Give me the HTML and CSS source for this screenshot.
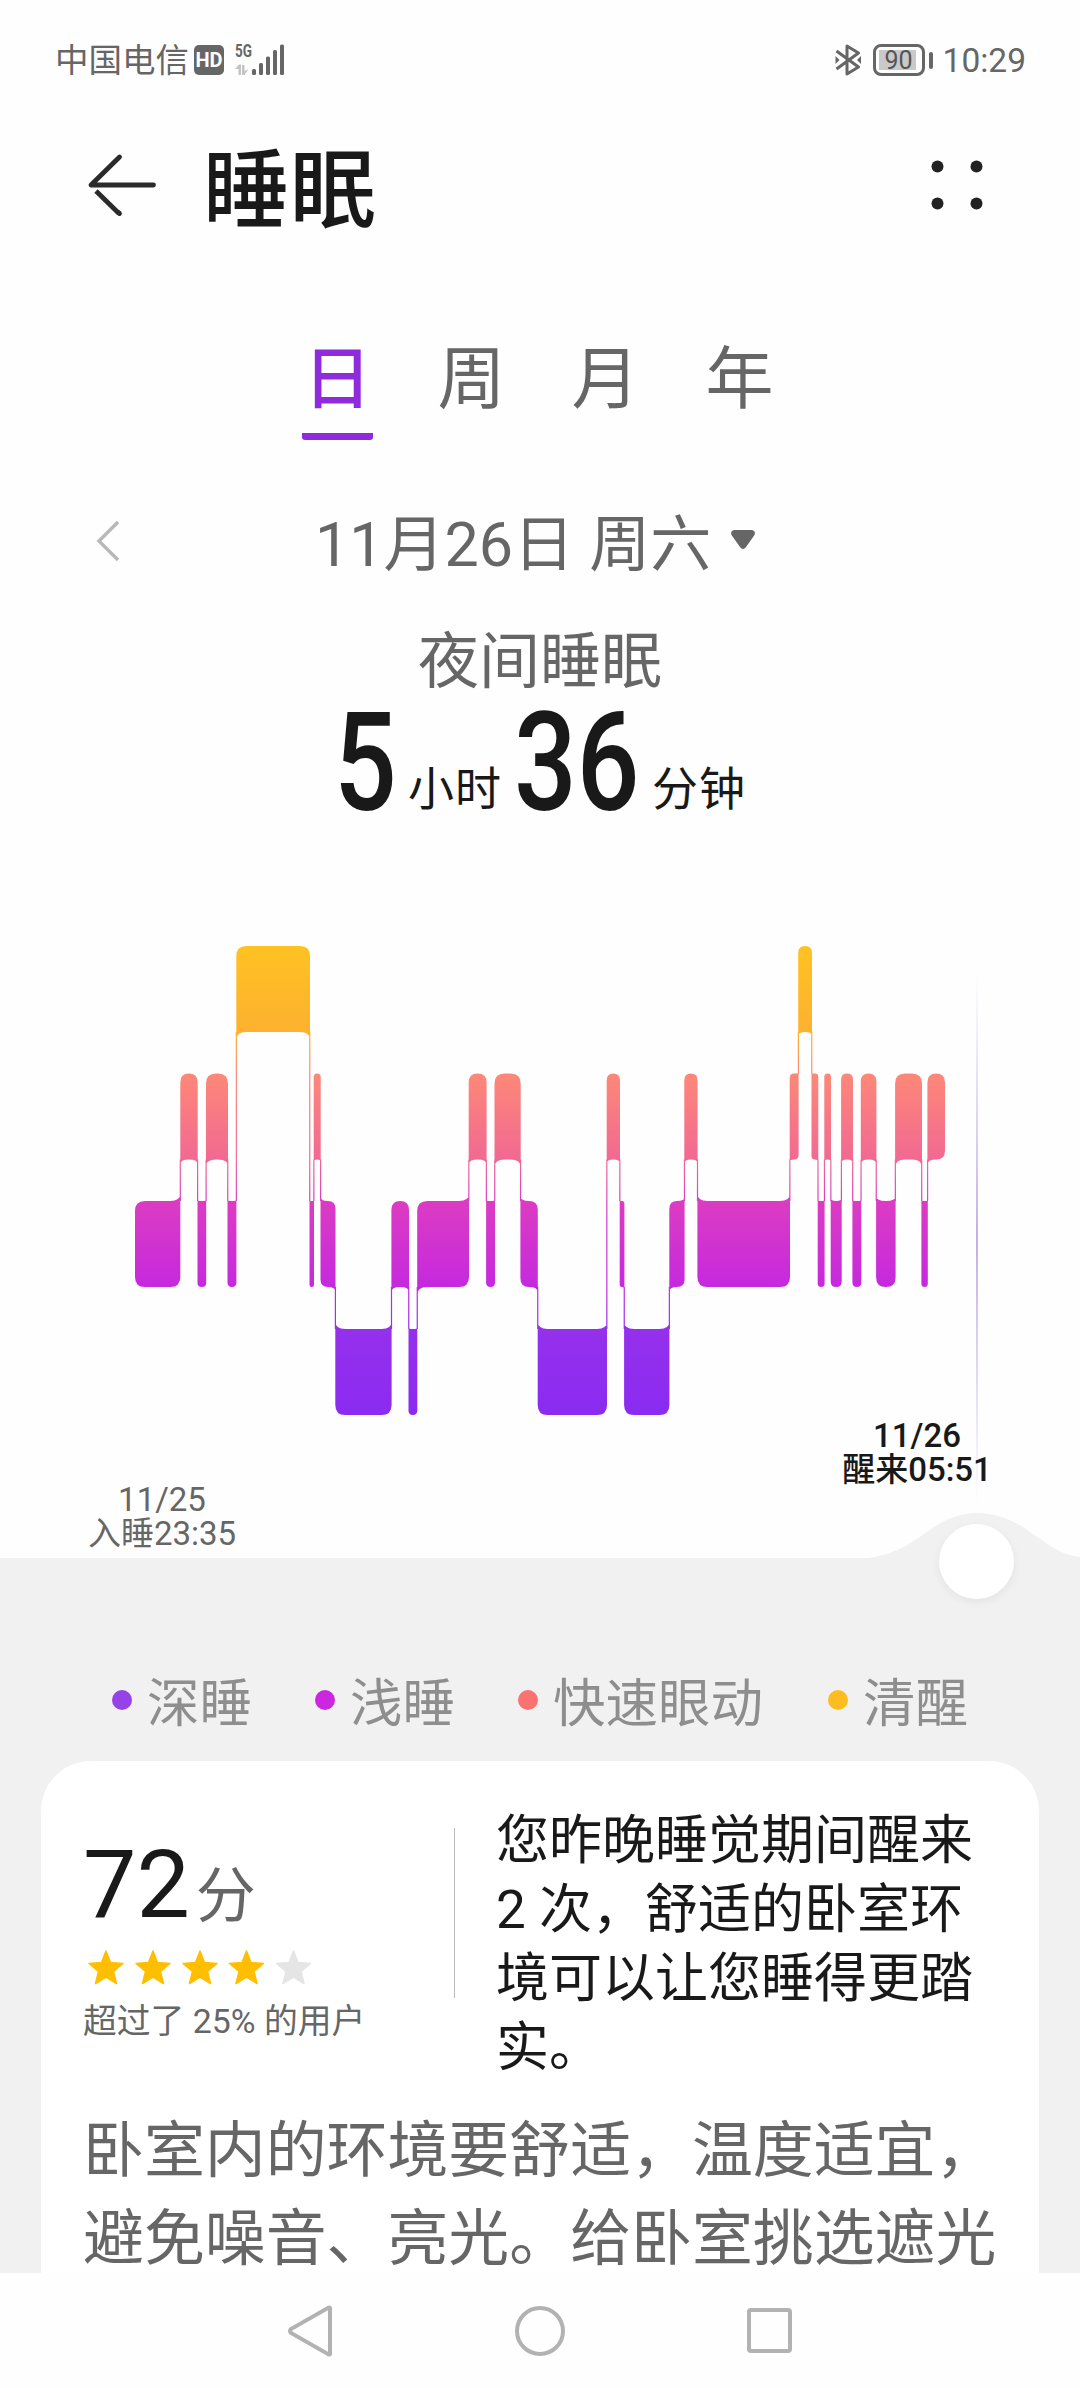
FILE: index.html
```html
<!DOCTYPE html>
<html lang="zh-CN">
<head>
<meta charset="utf-8">
<title>睡眠</title>
<link rel="stylesheet" href="styles.css">
</head>
<body>
<div class="screen">
  <header class="status">
    <span class="carrier">中国电信</span>
    <span class="hd">HD</span>
    <span class="network">
      <span class="gen">5G</span>
      <svg class="signal" width="50" height="32" viewBox="0 0 50 32">
        <g fill="#c4c4c4"><path d="M0 25l4-4.500h2V31H3.500v-6zM7 21h2.500v6l4-2-4 6H7z"/></g>
        <g fill="#666"><rect x="17" y="25" width="4" height="6" rx="1.500"/><rect x="24" y="19" width="4" height="12" rx="1.500"/><rect x="31" y="12.500" width="4" height="18.500" rx="1.500"/><rect x="38" y="6" width="4" height="25" rx="1.500"/><rect x="45" y="0.500" width="4" height="30.500" rx="1.500"/></g>
      </svg>
    </span>
    <svg class="bluetooth" width="27" height="34" viewBox="0 0 27 34" fill="none" stroke="#666" stroke-width="3" stroke-linejoin="round">
      <path d="M1.500 8L23.500 24 12 31V3l11.500 7L1.500 26"/><path d="M.5 13v8l4-4zM26 13v8l-4-4z" fill="#666" stroke="none"/>
    </svg>
    <span class="battery"><span class="level">90</span></span>
    <span class="battery-cap"></span>
    <span class="clock">10:29</span>
  </header>

  <div class="titlebar">
    <svg class="back" width="70" height="62" viewBox="0 0 70 62" fill="none" stroke="#2b2b2b" stroke-width="4.800" stroke-linecap="round" stroke-linejoin="round">
      <path d="M32.500 3L4 31h62.500"/><path d="M9 37L32 59.500" stroke-linecap="butt"/><path d="M31.500 58.500l1 1"/>
    </svg>
    <h1 class="title">睡眠</h1>
    <svg class="more" width="52" height="50" viewBox="0 0 52 50" fill="#222"><circle cx="6.500" cy="6.500" r="6"/><circle cx="45.500" cy="6.500" r="6"/><circle cx="6.500" cy="43.500" r="6"/><circle cx="45.500" cy="43.500" r="6"/></svg>
  </div>

  <nav class="tabs">
    <span class="tab active">日</span><span class="tab">周</span><span class="tab">月</span><span class="tab">年</span>
  </nav>

  <div class="date-row">
    <svg class="prev" width="24" height="42" viewBox="0 0 24 42" fill="none" stroke="#b8b8b8" stroke-width="3.400"><path d="M22 2L3 21l19 19"/></svg>
    <span class="date">11月26日 周六</span>
    <svg class="caret" width="26" height="22" viewBox="0 0 26 22" fill="#666"><path d="M4 1h18q4 1 2.500 5L16 18q-3 4-6 0L1.500 6Q0 2 4 1z"/></svg>
  </div>

  <div class="subtitle">夜间睡眠</div>
  <div class="duration">
    <span class="num one"><span class="digits">5</span></span><span class="unit">小时</span>
    <span class="num two"><span class="digits">36</span></span><span class="unit">分钟</span>
  </div>

  <section class="chart">
    <svg class="plot" width="1080" height="658" viewBox="0 900 1080 658">
      <defs>
        <linearGradient id="stages" gradientUnits="userSpaceOnUse" x1="0" y1="946" x2="0" y2="1415">
          <stop offset="0" stop-color="#ffc222"/><stop offset=".185" stop-color="#fdb12f"/>
          <stop offset=".272" stop-color="#fd8878"/><stop offset=".456" stop-color="#f16992"/>
          <stop offset=".544" stop-color="#dc3cc2"/><stop offset=".727" stop-color="#c529de"/>
          <stop offset=".817" stop-color="#9530ec"/><stop offset="1" stop-color="#8b2bf1"/>
        </linearGradient>
        <linearGradient id="cursor" x1="0" y1="0" x2="0" y2="1">
          <stop offset="0" stop-color="#c4b4f0" stop-opacity="0"/><stop offset=".5" stop-color="#c0b0e6"/><stop offset="1" stop-color="#c4b4f0" stop-opacity="0"/>
        </linearGradient>
      </defs>
      <rect x="976" y="972" width="2" height="535" fill="url(#cursor)"/>
      <g id="bars" fill="url(#stages)"></g>
    </svg>
    <div class="mark start">11/25<br>入睡23:35</div>
    <div class="mark end">11/26<br>醒来05:51</div>
    <svg class="bump" width="226" height="46" viewBox="0 0 226 46" fill="#f1f1f1"><path d="M0 46C68 44 72 1 123 0c50 1 65 40 103 44v2z"/></svg>
    <span class="handle"></span>
  </section>

  <section class="details">
    <ul class="legend">
      <li class="deep">深睡</li><li class="light">浅睡</li><li class="rem">快速眼动</li><li class="awake">清醒</li>
    </ul>
    <article class="card">
      <div class="summary">
        <div class="score">
          <div class="points"><b>72</b><span>分</span></div>
          <svg class="stars" width="210" height="38" viewBox="0 0 210 38">
            <defs><path id="star" d="M0-17L4.500-5.500 17-4.500 7.500 3.500 10.500 15.500 0 9-10.500 15.500-7.500 3.500-17-4.500-4.500-5.500z" stroke-width="1.500" stroke-linejoin="round"/></defs>
            <g fill="#ffbf00" stroke="#ffbf00"><use href="#star" x="19" y="19"/><use href="#star" x="66" y="19"/><use href="#star" x="113" y="19"/><use href="#star" x="159.500" y="19"/></g>
            <use href="#star" x="206.500" y="19" fill="#e5e5e5" stroke="#e5e5e5"/>
          </svg>
          <div class="rank">超过了 25% 的用户</div>
        </div>
        <p class="comment">您昨晚睡觉期间醒来<br>2 次，舒适的卧室环<br>境可以让您睡得更踏<br>实。</p>
      </div>
      <p class="advice">卧室内的环境要舒适，温度适宜，<br>避免噪音、亮光。给卧室挑选遮光</p>
    </article>
  </section>

  <footer class="navbar">
    <svg width="48" height="54" viewBox="0 0 48 54"><path d="M43 4v46q-1 1-2 0L4 29q-2-2 0-4L41 4q1-1 2 0z"/></svg>
    <svg width="54" height="54" viewBox="0 0 54 54"><circle cx="27" cy="27" r="23"/></svg>
    <svg width="48" height="54" viewBox="0 0 48 54"><rect x="4" y="6" width="41" height="41" rx="2"/></svg>
  </footer>
</div>
<script src="chart.js"></script>
</body>
</html>
```
FILE: styles.css
```css
* { box-sizing: border-box; }
body {
  margin: 0;
  background: #fefefe;
  font-family: Roboto, "Noto Sans CJK SC", sans-serif;
  color: #666;
}
.screen {
  width: 1080px;
  height: 2388px;
  display: flex;
  flex-direction: column;
  overflow: hidden;
}
h1, p, ul { margin: 0; padding: 0; }
svg { display: block; flex: none; overflow: visible; }

.status {
  height: 120px;
  padding: 0 54px 0 55px;
  display: flex;
  align-items: center;
  font-size: 33.500px;
  line-height: 40px;
}
.carrier { height: 38px; width: 139px; white-space: nowrap; }
.hd {
  width: 30px;
  height: 30px;
  border-radius: 5px;
  background: #666;
  color: #fff;
  font-size: 20px;
  font-weight: 700;
  line-height: 31px;
  text-align: center;
}
.network { width: 52px; height: 32px; margin-left: 11px; position: relative; }
.gen {
  position: absolute;
  left: 0;
  top: -1px;
  font-size: 18px;
  font-weight: 700;
  line-height: 16px;
  transform: scaleX(.75);
  transform-origin: 0 0;
}
.bluetooth { margin-left: auto; }
.battery {
  width: 52px;
  height: 32px;
  margin-left: 11px;
  border: 3px solid #666;
  border-radius: 8px;
  padding: 3px;
}
.level {
  display: block;
  width: 37px;
  height: 20px;
  background: #c9c9c9;
  color: #555;
  font-size: 25px;
  line-height: 21px;
  text-align: center;
  padding-left: 3px;
}
.battery-cap { width: 4px; height: 17px; border-radius: 2px; background: #666; margin: 0 10px 0 4px; }
.clock { height: 38px; }

.titlebar {
  height: 130px;
  padding: 0 97px 0 87px;
  display: flex;
  align-items: center;
}
.title {
  margin-left: 46px;
  padding-top: 7px;
  font-size: 86px;
  line-height: 124px;
  height: 124px;
  font-weight: 500;
  letter-spacing: 1px;
  color: #191919;
}
.more { margin-left: auto; }

.tabs {
  height: 190px;
  padding: 72px 3px 0 0;
  display: flex;
  justify-content: center;
  gap: 63px;
}
.tab {
  width: 71px;
  height: 118px;
  text-align: center;
  font-size: 68px;
  line-height: 116px;
}
.active { color: #8f2bdc; font-weight: 500; border-bottom: 7px solid #8f2bdc; border-radius: 3px; }

.date-row {
  height: 192px;
  padding: 0 96px;
  display: flex;
  align-items: flex-start;
}
.prev { margin-top: 80px; }
.date { margin: 65px 0 0 195px; font-size: 61px; line-height: 80px; height: 80px; white-space: pre; }
.caret { margin: 89px 0 0 19px; }

.subtitle { text-align: center; font-size: 61px; line-height: 60px; height: 60px; }
.duration {
  height: 208px;
  padding-left: 334px;
  display: flex;
  align-items: baseline;
  color: #191919;
  white-space: nowrap;
}
.num { font-size: 138px; font-weight: 500; line-height: 142px; }
.one { width: 74px; }
.two { width: 138px; margin-left: 12px; }
.digits { display: inline-block; transform: scaleX(.8); transform-origin: 0 0; }
.unit { font-size: 46px; line-height: 60px; letter-spacing: 1px; transform: translateY(-5px); }

.chart { position: relative; height: 658px; flex: none; }
.mark {
  position: absolute;
  width: 150px;
  text-align: center;
  font-size: 33px;
  line-height: 34px;
  white-space: nowrap;
}
.start { left: 87px; top: 583px; }
.end { left: 842px; top: 519px; font-weight: 500; color: #191919; }
.bump { position: absolute; left: 854px; top: 613px; }
.handle {
  position: absolute;
  left: 939px;
  top: 624px;
  width: 75px;
  height: 75px;
  border-radius: 50%;
  background: #fff;
  box-shadow: 0 3px 10px rgba(0, 0, 0, .06);
}

.details {
  height: 715px;
  flex: none;
  padding: 107px 41px 0;
  background: #f1f1f1;
}
.legend { height: 96px; display: flex; padding-left: 71px; list-style: none; }
.legend li {
  display: flex;
  align-items: center;
  height: 70px;
  padding-top: 8px;
  font-size: 52.500px;
  line-height: 62px;
  color: #8e8e8e;
}
.legend .deep, .legend .light { margin-right: 63px; }
.legend .rem { margin-right: 65px; }
.legend li::before { content: ""; width: 20px; height: 20px; border-radius: 50%; margin: 0 15px 8px 0; }
.legend .deep::before { background: #9543e6; }
.legend .light::before { background: #cb27df; }
.legend .rem::before { background: #fb7370; }
.legend .awake::before { background: #fdbd20; }

.card {
  height: 512px;
  padding: 46px 42px 0;
  border-radius: 50px 50px 0 0;
  background: #fff;
}
.summary { display: flex; height: 301px; }
.score { width: 413px; padding-top: 23px; position: relative; }
.score::after {
  content: "";
  position: absolute;
  left: 371px;
  top: 21px;
  width: 1px;
  height: 170px;
  background: #bbb;
}
.points { display: flex; align-items: baseline; height: 113px; }
.points b { font-size: 95px; font-weight: 400; line-height: 110px; color: #191919; }
.points span { font-size: 60px; line-height: 60px; margin-left: 6px; }
.stars { margin: 6px 0 0 4px; }
.rank { font-size: 33.800px; line-height: 44px; margin-top: 13px; white-space: nowrap; }
.comment { font-size: 53px; line-height: 69px; color: #191919; white-space: nowrap; }
.advice { font-size: 60.900px; line-height: 88px; white-space: nowrap; }

.navbar { flex: 1; display: flex; align-items: center; justify-content: center; gap: 178px; background: #fefefe; }
.navbar svg { fill: none; stroke: #b2b2b2; stroke-width: 4; }
```
FILE: chart.js
```js
// Sleep stages through the night: [stage, start x, end x]; 0 awake, 1 REM, 2 light, 3 deep.
const segments = [
  [2,135,180.3],[1,180.3,197.7],[2,197.5,206.2],[1,206,228],[2,227.5,236.4],[0,236.3,310],
  [2,309.5,314],[1,313.7,320.7],[2,320.5,335.5],[3,335.3,391.6],[2,391.4,409],[3,408.5,417.3],
  [2,417.2,469],[1,468.7,486.6],[2,486.1,495],[1,494.5,520.7],[2,520.4,537.8],[3,537.7,607],
  [1,606.7,620],[2,619.7,624.4],[3,624.1,669.4],[2,669.3,684.6],[1,684.3,697.6],[2,697.4,790],
  [1,789.7,798.6],[0,798.2,812],[1,811.5,818.3],[2,817.7,824.6],[1,824.3,831],[2,830.7,841.7],
  [1,841.1,853],[2,852.4,861.3],[1,860.8,876.4],[2,876.1,895.6],[1,895.1,922],[2,921.4,927.8],[1,927.4,945]
];
const tops = [946, 1073.5, 1201, 1329];
const barHeight = 86;

function barPath(i) {
  const [stage, x0, x1] = segments[i];
  const before = i > 0 ? segments[i - 1][0] : null;
  const after = i < segments.length - 1 ? segments[i + 1][0] : null;
  const y0 = tops[stage], y1 = y0 + barHeight, w = x1 - x0;
  const r = Math.min(10, w / 2);
  const flare = w < 10 ? 1.5 : Math.min(8, w * 0.3);
  // A corner facing its neighbour's band flares along the connector; others are rounded.
  const tl = before !== null && before < stage ? -flare : r;
  const tr = after !== null && after < stage ? -flare : r;
  const bl = before !== null && before > stage ? -flare : r;
  const br = after !== null && after > stage ? -flare : r;
  return `M${x0} ${y0 + tl}Q${x0} ${y0} ${x0 + r} ${y0}H${x1 - r}Q${x1} ${y0} ${x1} ${y0 + tr}` +
    `V${y1 - br}Q${x1} ${y1} ${x1 - r} ${y1}H${x0 + r}Q${x0} ${y1} ${x0} ${y1 - bl}Z`;
}

let d = "";
segments.forEach(([stage, , end], i) => {
  d += barPath(i);
  const next = segments[i + 1];
  if (next) {
    const upper = tops[Math.min(stage, next[0])] + barHeight;
    const lower = tops[Math.max(stage, next[0])];
    const x = (end + next[1]) / 2 - 0.6;
    d += `M${x} ${upper}h1.2V${lower}h-1.2z`;
  }
});
const path = document.createElementNS("http://www.w3.org/2000/svg", "path");
path.setAttribute("d", d);
document.getElementById("bars").appendChild(path);
```
